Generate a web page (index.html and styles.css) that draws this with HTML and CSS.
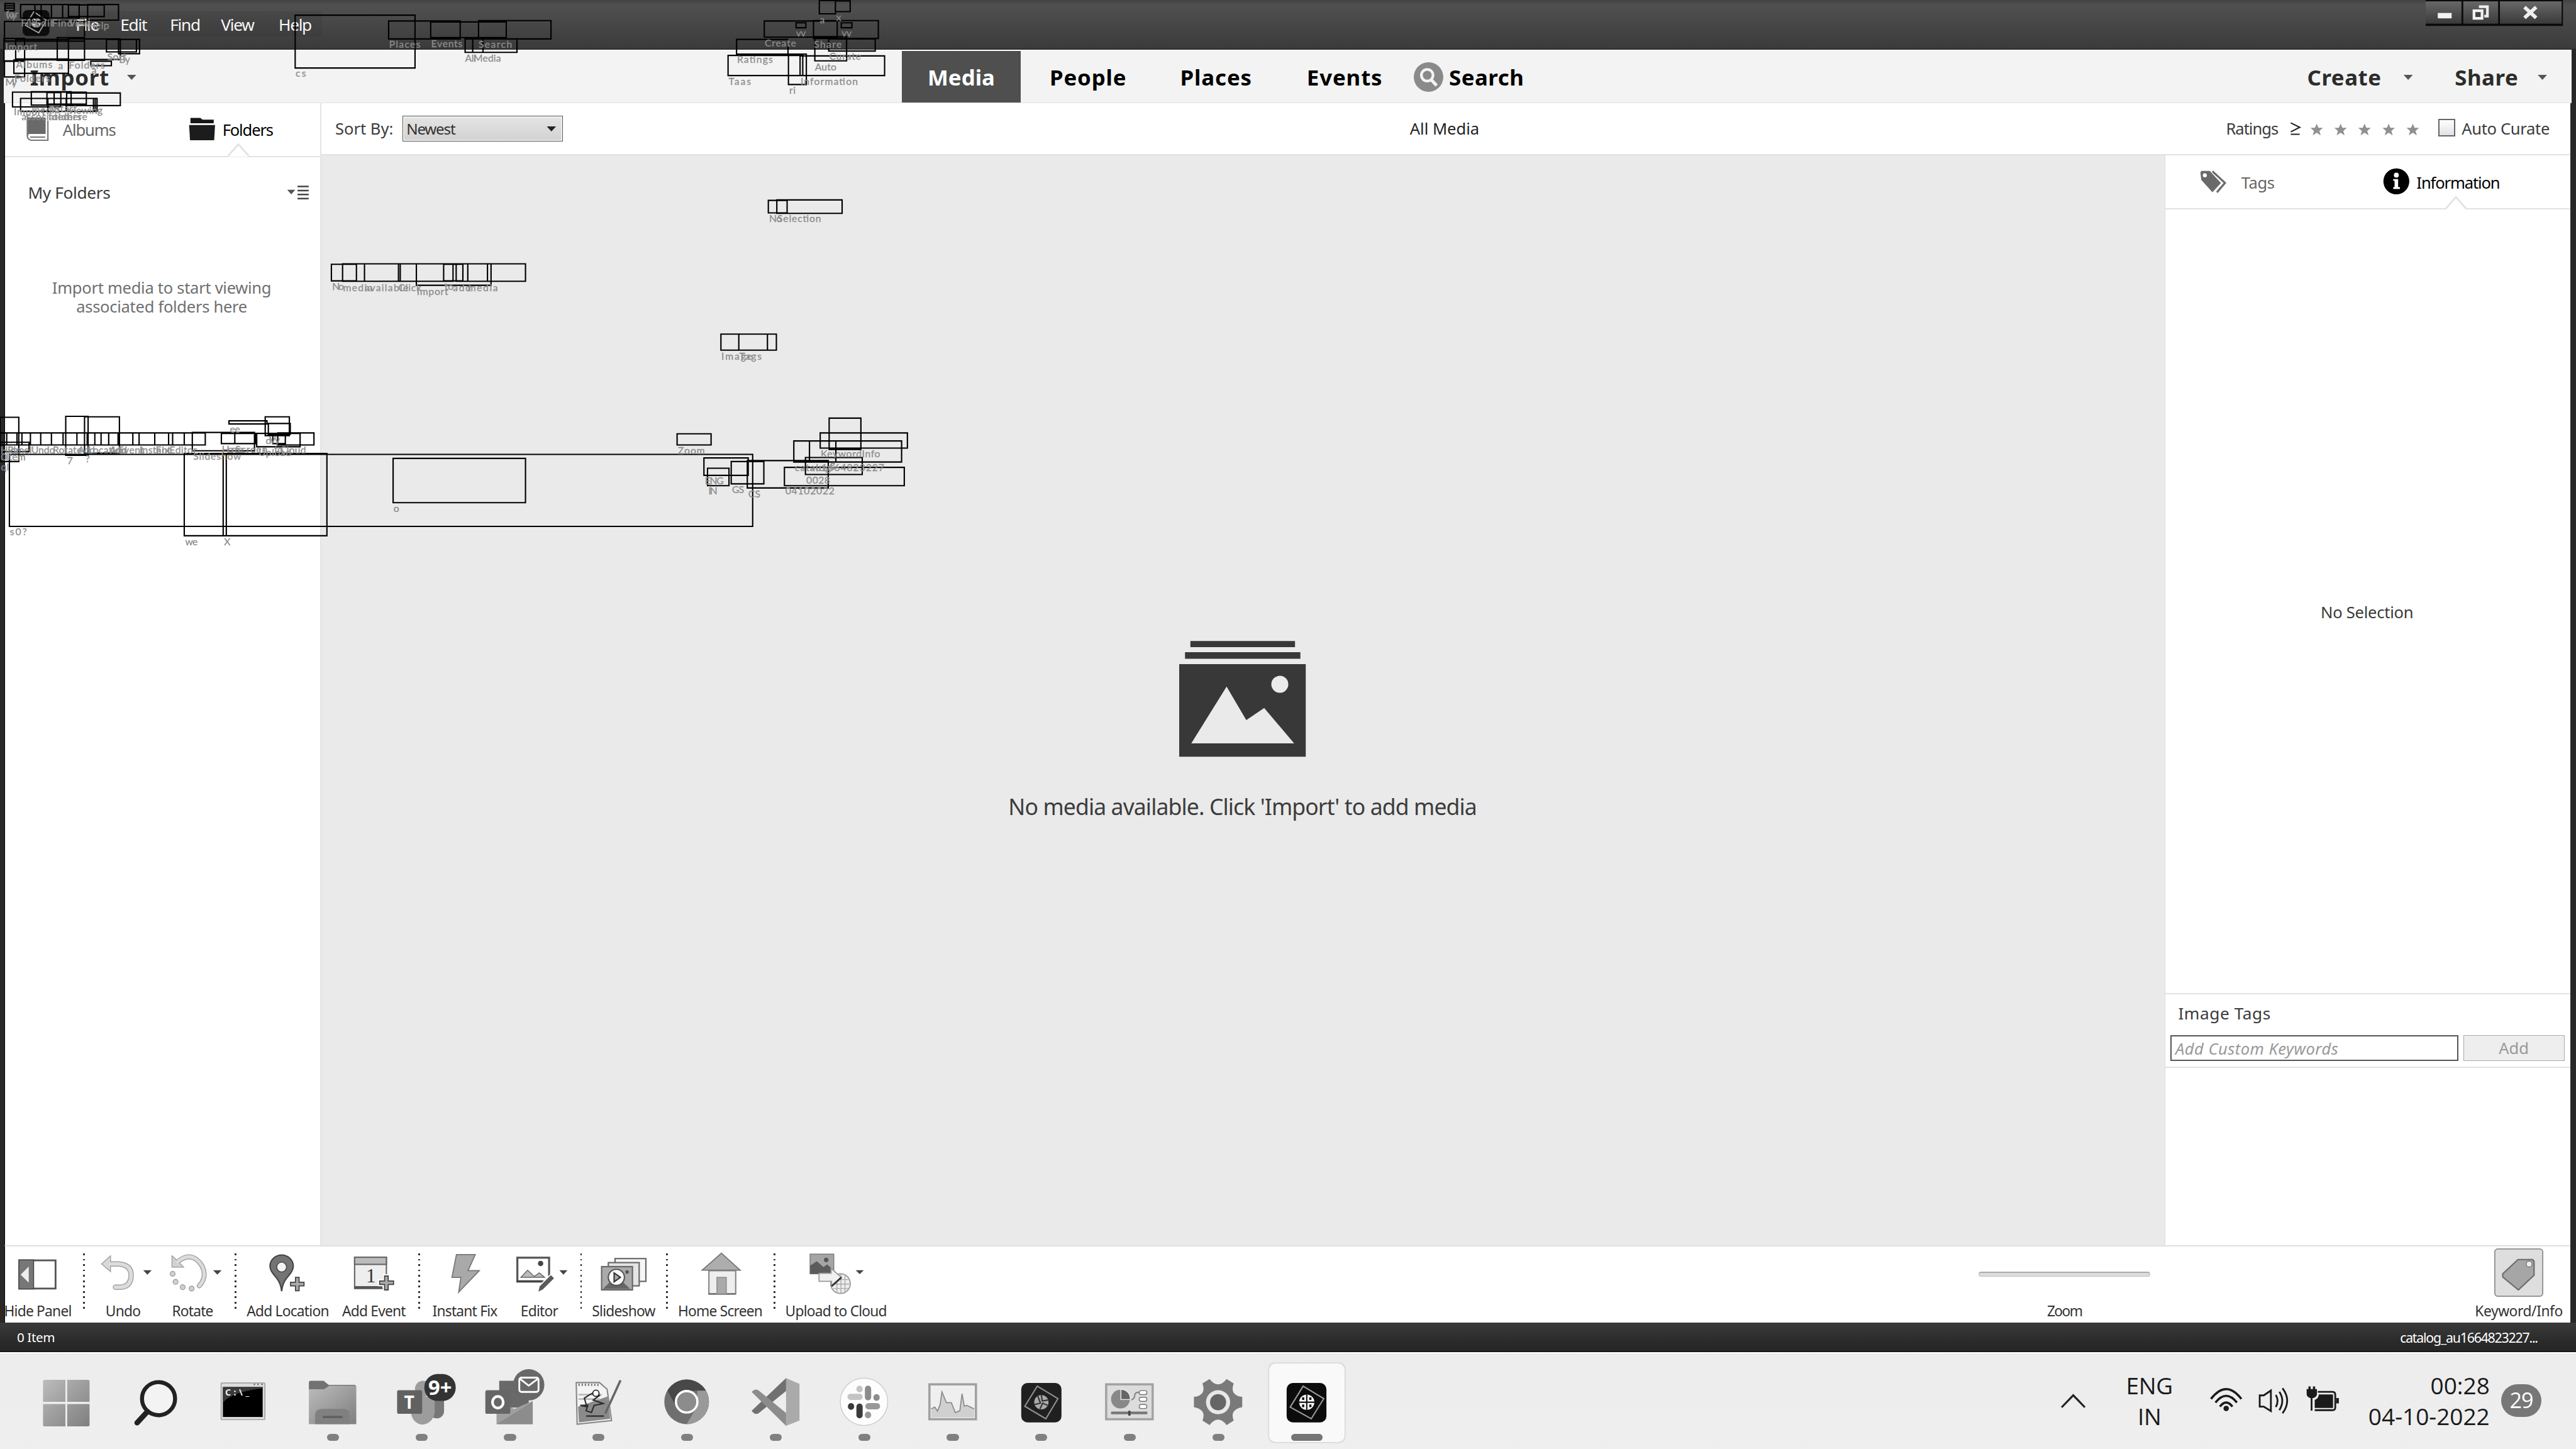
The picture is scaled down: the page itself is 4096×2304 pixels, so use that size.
FILE: index.html
```html
<!DOCTYPE html>
<html lang="en">
<head>
<meta charset="utf-8">
<title>Organizer</title>
<link rel="stylesheet" href="styles.css">
</head>
<body>
<div class="desktop">
  <header class="titlebar">
    <svg class="logo" viewBox="51 22 60 58"><rect x="51" y="22" width="60" height="58" rx="11" fill="#0d0d0d"/><path d="M76 26L104 45L87 73L57 56Z" fill="none" stroke="#a8a8a8" stroke-width="2.5"/><circle cx="81" cy="50" r="11" fill="#c9c9c9"/><path d="M81 39V61M70 50H92M74 43L88 57" stroke="#222" stroke-width="2"/></svg>
    <nav class="menu"><span class="m1">File</span><span class="m2">Edit</span><span class="m3">Find</span><span class="m4">View</span><span class="m5">Help</span></nav>
    <div class="winbtns">
      <svg viewBox="5424 0 307 58"><defs><linearGradient id="wb" x1="0" y1="0" x2="0" y2="1"><stop offset="0" stop-color="#686868"/><stop offset="1" stop-color="#3a3a3a"/></linearGradient></defs><rect x="5424" y="0" width="307" height="58" fill="#0a0a0a"/><rect x="5424" y="3" width="80" height="50" fill="url(#wb)"/><rect x="5508" y="3" width="78" height="50" fill="url(#wb)"/><rect x="5590" y="3" width="138" height="50" fill="url(#wb)"/><rect x="5451" y="29" width="31" height="12" fill="#f2f2f2"/><path d="M5543 15H5562V36H5555" fill="none" stroke="#eee" stroke-width="6"/><rect x="5532" y="24" width="18" height="17" fill="#444" stroke="#f2f2f2" stroke-width="6"/><path d="M5645 16L5671 40M5671 16L5645 40" stroke="#eee" stroke-width="8"/></svg>
    </div>
  </header>
  <nav class="modes">
    <div class="mode import">Import<i class="caret"></i></div>
    <div class="mode tab active">Media</div>
    <div class="mode people">People</div>
    <div class="mode places">Places</div>
    <div class="mode events">Events</div>
    <div class="mode search"><svg viewBox="0 0 66 66"><circle cx="33" cy="33" r="33" fill="#8a8a8a"/><circle cx="30" cy="29" r="13" fill="none" stroke="#f4f4f4" stroke-width="6"/><path d="M39 39L51 52" stroke="#f4f4f4" stroke-width="7"/></svg>Search</div>
    <div class="mode create">Create<i class="caret"></i></div>
    <div class="mode share">Share<i class="caret"></i></div>
  </nav>
  <div class="workspace">
    <aside class="left">
      <div class="tabs">
        <svg class="albums-ic" viewBox="60 266 51 56"><path d="M61 267H103V304H66Q63 306 63 311" fill="#6a6a6a"/><path d="M108 274V318H70Q62 316 62 308V270M68 311H102" fill="none" stroke="#777" stroke-width="3"/></svg>
        <span class="t-albums">Albums</span>
        <svg class="folders-ic" viewBox="422 262 60 54"><path d="M426 276V264H448L453 268H478V276Z" fill="#151515"/><path d="M423 280H481L479 314H425Z" fill="#1c1c1c"/></svg>
        <span class="t-folders">Folders</span>
        <svg class="notch n-left" viewBox="0 0 48 30"><path d="M1 30L24 0L47 30Z" fill="#fff"/><path d="M1 28L24 2L47 28" fill="none" stroke="#e2e2e2" stroke-width="4"/></svg>
      </div>
      <div class="folders-head"><span>My Folders</span>
        <svg viewBox="642 412 50 34"><path d="M643 423H661L652 433Z" fill="#555"/><path d="M666 415.500H691M666 424.500H691M666 433.500H691M666 442.500H691" stroke="#444" stroke-width="3.500"/></svg>
      </div>
      <p class="hint">Import media to start viewing<br>associated folders here</p>
    </aside>
    <div class="center-right">
      <div class="filter">
        <span class="sortby">Sort By:</span>
        <div class="select"><span>Newest</span><i class="caret dark"></i></div>
        <span class="allmedia">All Media</span>
        <span class="ratings">Ratings</span>
        <svg class="stars" viewBox="5120 264 292 44"><path d="M5122 273L5142 283L5122 293M5122 298.500H5142" fill="none" stroke="#222" stroke-width="3"/><defs><path id="st" d="M0-13L4-4L14-4L6 3L9 13L0 7L-9 13L-6 3L-14-4L-4-4Z" fill="#909090"/></defs><use href="#st" x="5180" y="288"/><use href="#st" x="5233.500" y="288"/><use href="#st" x="5287" y="288"/><use href="#st" x="5341" y="288"/><use href="#st" x="5395" y="288"/></svg>
        <i class="check"></i>
        <span class="curate">Auto Curate</span>
      </div>
      <div class="split">
        <main class="stage">
          <svg viewBox="2636 1430 284 264"><path d="M2661 1433H2895V1447H2661ZM2649 1458H2907V1473H2649ZM2636 1485H2919V1692H2636Z" fill="#383838"/><circle cx="2861" cy="1530" r="19" fill="#eaeaea"/><path d="M2663 1662L2742 1535L2786 1610L2826 1583L2893 1662Z" fill="#eaeaea"/></svg>
          <p>No media available. Click 'Import' to add media</p>
        </main>
        <aside class="right">
          <div class="tabs">
            <svg class="tags-ic" viewBox="4920 383 60 50"><path d="M4921 387L4924 384H4942L4967 411L4948 432L4923 404Z" fill="#6a6a6a"/><circle cx="4931" cy="394" r="4.500" fill="#fff"/><path d="M4948 385L4976 411L4958 432" fill="none" stroke="#6a6a6a" stroke-width="4.500"/></svg>
            <span class="t-tags">Tags</span>
            <svg class="info-ic" viewBox="0 0 60 60"><circle cx="30" cy="30" r="29" fill="#000"/><circle cx="30" cy="16" r="5.500" fill="#fff"/><path d="M23 25H34V43H38V47H23V43H26V29H23Z" fill="#fff"/></svg>
            <span class="t-info">Information</span>
            <svg class="notch n-right" viewBox="0 0 48 30"><path d="M1 30L24 0L47 30Z" fill="#fff"/><path d="M1 28L24 2L47 28" fill="none" stroke="#e2e2e2" stroke-width="4"/></svg>
          </div>
          <div class="nosel">No Selection</div>
          <div class="imgtags">
            <h2>Image Tags</h2>
            <div class="addrow"><div class="kw">Add Custom Keywords</div><div class="addbtn">Add</div></div>
          </div>
          <div class="blank"></div>
        </aside>
      </div>
    </div>
  </div>
  <footer class="tools">
    <div class="tool hide"><svg viewBox="12 2795 146 105"><rect x="44" y="2819" width="81" height="63" fill="#fff" stroke="#555" stroke-width="4"/><rect x="43" y="2818" width="33" height="65" fill="#777" stroke="#444" stroke-width="2"/><path d="M65 2833V2869L47 2851Z" fill="#eee"/></svg><span>Hide Panel</span></div>
    <i class="sep s1"></i>
    <div class="tool undo"><svg viewBox="216 2795 119 105"><path d="M246 2827H266Q294 2829 294 2852Q294 2878 270 2879H259" fill="none" stroke="#a2a2a2" stroke-width="12" stroke-linecap="round"/><path d="M248 2809V2844L228 2827Z" fill="#d8d8d8" stroke="#a2a2a2" stroke-width="2"/><path d="M246 2827H266Q294 2829 294 2852Q294 2878 270 2879H259" fill="none" stroke="#dcdcdc" stroke-width="8" stroke-linecap="round"/><path d="M321 2841H340L330.500 2851Z" fill="#444"/></svg><span>Undo</span></div>
    <div class="tool rotate"><svg viewBox="345 2795 172 105"><g fill="none" stroke-linecap="round"><path d="M398 2822Q420 2803 440 2817Q458 2832 457 2852Q456 2866 446 2876" stroke="#a2a2a2" stroke-width="11"/><path d="M385 2809V2834H411L403 2826L394 2817Z" fill="#d2d2d2" stroke="#a2a2a2" stroke-width="2"/><path d="M398 2822Q420 2803 440 2817Q458 2832 457 2852Q456 2866 446 2876" stroke="#dcdcdc" stroke-width="7"/></g><g fill="#d0d0d0" stroke="#a2a2a2" stroke-width="2"><circle cx="386.500" cy="2849" r="5.500"/><circle cx="393" cy="2867" r="5.500"/><circle cx="409" cy="2879" r="5.500"/><circle cx="429" cy="2882" r="5.500"/></g><path d="M477 2841H496L486.500 2851Z" fill="#444"/></svg><span>Rotate</span></div>
    <i class="sep s2"></i>
    <div class="tool addloc"><svg viewBox="529 2795 230 105"><path d="M630 2888Q628 2868 615 2854Q604 2842 604 2832A26 25 0 0 1 656 2832Q656 2842 645 2854Q632 2868 630 2888Z" fill="#747474" stroke="#444" stroke-width="3"/><circle cx="630" cy="2834" r="11" fill="#f4f4f4" stroke="#444" stroke-width="2"/><path d="M661 2857H669V2868H680V2876H669V2887H661V2876H650V2868H661Z" fill="#aaa" stroke="#444" stroke-width="2.500"/></svg><span>Add Location</span></div>
    <div class="tool addevt"><svg viewBox="759 2795 155 105"><rect x="794" y="2812" width="71" height="70" fill="#eee" stroke="#666" stroke-width="3"/><rect x="794" y="2812" width="71" height="16" fill="#bbb" stroke="#666" stroke-width="3"/><path d="M793 2879H856" stroke="#555" stroke-width="5"/><text x="830" y="2868" font-size="44" text-anchor="middle" class="serif" fill="#333">1</text><path d="M861 2854H869V2865H881V2873H869V2885H861V2873H850V2865H861Z" fill="#aaa" stroke="#fff" stroke-width="8"/><path d="M861 2854H869V2865H881V2873H869V2885H861V2873H850V2865H861Z" fill="#aaa" stroke="#444" stroke-width="2.500"/></svg><span>Add Event</span></div>
    <i class="sep s3"></i>
    <div class="tool fix"><svg viewBox="952 2795 176 105"><path d="M1022 2806H1064L1048 2842H1073L1027 2890L1032 2857H1012Z" fill="#a9a9a9" stroke="#777" stroke-width="2.500"/></svg><span>Instant Fix</span></div>
    <div class="tool editor"><svg viewBox="1128 2795 157 105"><rect x="1157" y="2813" width="71" height="53" fill="#fff" stroke="#555" stroke-width="4.500"/><path d="M1155 2866H1212" stroke="#444" stroke-width="5"/><circle cx="1209" cy="2826" r="6" fill="#444"/><path d="M1165 2857L1180 2841L1195 2855L1206 2847L1218 2857Z" fill="#bbb" stroke="#666" stroke-width="2"/><path d="M1204 2889L1207 2877L1232 2852L1239 2859L1214 2884Z" fill="#666" stroke="#fff" stroke-width="5"/><path d="M1204 2889L1207 2877L1232 2852L1239 2859L1214 2884Z" fill="#5a5a5a"/><path d="M1251 2841H1269L1260 2851Z" fill="#444"/></svg><span>Editor</span></div>
    <i class="sep s4"></i>
    <div class="tool slide"><svg viewBox="1310 2795 170 105"><g stroke="#666" stroke-width="3"><rect x="1376" y="2815" width="69" height="51" fill="#f6f6f6"/><rect x="1361" y="2824" width="69" height="52" fill="#e4e4e4"/><rect x="1346" y="2833" width="69" height="52" fill="#aaa"/></g><path d="M1349 2883L1366 2866H1392L1410 2883Z" fill="#666"/><circle cx="1403" cy="2845" r="4" fill="#555"/><circle cx="1379" cy="2857" r="18" fill="#fff" stroke="#555" stroke-width="3"/><path d="M1374 2847V2867L1388 2857Z" fill="#aaa" stroke="#333" stroke-width="3"/></svg><span>Slideshow</span></div>
    <i class="sep s5"></i>
    <div class="tool home"><svg viewBox="1500 2795 222 105"><rect x="1586" y="2842" width="60" height="52" fill="#eee" stroke="#888" stroke-width="3"/><path d="M1585 2894H1646" stroke="#777" stroke-width="4"/><rect x="1604" y="2857" width="21" height="37" fill="#aaa" stroke="#888" stroke-width="2"/><path d="M1614 2803L1656 2841H1571Z" fill="#adadad" stroke="#777" stroke-width="2.500"/></svg><span>Home Screen</span></div>
    <i class="sep s6"></i>
    <div class="tool upload"><svg viewBox="1750 2795 240 105"><circle cx="1880" cy="2871" r="22" fill="#eee" stroke="#999" stroke-width="2.500"/><path d="M1864 2862H1898M1860 2872H1900M1864 2882H1898M1872 2852V2890M1881 2850V2892M1890 2853V2890" stroke="#aaa" stroke-width="2"/><rect x="1812" y="2805" width="53" height="44" fill="#a5a5a5" stroke="#777" stroke-width="2"/><path d="M1812 2849V2831L1827 2821L1842 2834L1850 2828L1864 2840V2849Z" fill="#5c5c5c"/><circle cx="1848" cy="2818" r="5" fill="#555"/><path d="M1832 2848H1859V2837L1882 2857L1860 2876V2866H1832Z" fill="#f0f0f0" stroke="#999" stroke-width="2.500"/><path d="M1882 2857L1860 2877" stroke="#333" stroke-width="4"/><path d="M1914 2841H1932L1923 2850Z" fill="#444"/></svg><span>Upload to Cloud</span></div>
    <div class="zoomer"><i class="track"></i><span>Zoom</span></div>
    <div class="tool kwinfo"><div class="kwbtn"><svg viewBox="5578 2793 110 108"><path d="M5631 2818H5664L5667 2822V2853L5632 2886L5597 2857V2850Z" fill="#a6a6a6" stroke="#6c6c6c" stroke-width="3"/><circle cx="5656" cy="2828" r="6.500" fill="#eee" stroke="#777" stroke-width="2"/></svg></div><span>Keyword/Info</span></div>
  </footer>
  <div class="status"><span>0 Item</span><span class="cat">catalog_au1664823227...</span></div>
  <div class="taskbar">
    <div class="apps">
      <div class="app"><svg viewBox="49 3023 198 217"><defs><linearGradient id="g1" x1="0" y1="0" x2="1" y2="1"><stop offset="0" stop-color="#bcbcbc"/><stop offset="1" stop-color="#7e7e7e"/></linearGradient></defs><path d="M96 3089Q96 3085 100 3085H146V3134H96ZM150 3085H196Q200 3085 200 3089V3134H150ZM96 3139H146V3189H100Q96 3189 96 3185ZM150 3139H200V3185Q200 3189 196 3189H150Z" fill="url(#g1)"/></svg></div>
      <div class="app"><svg viewBox="247 3023 198 217"><circle cx="354" cy="3127" r="37" fill="#f3f3f3" stroke="#222" stroke-width="9"/><path d="M329 3156L306 3181" stroke="#222" stroke-width="12" stroke-linecap="round"/></svg></div>
      <div class="app"><svg viewBox="445 3023 198 217"><rect x="495" y="3092" width="98" height="82" rx="2" fill="#ddd" stroke="#999" stroke-width="2"/><rect x="499" y="3101" width="89" height="67" fill="#000"/><path d="M500 3101H588V3104Q520 3112 500 3135Z" fill="#3a3a3a"/><path d="M568 3095H571M576 3095H579M585 3095H588" stroke="#555" stroke-width="3"/><text x="504" y="3120" font-size="20" font-weight="700" textLength="54" fill="#eee">C:\_</text></svg></div>
      <div class="app run"><svg viewBox="643 3023 198 217"><path d="M691 3091Q691 3087 695 3087H724L735 3096H795V3110H691Z" fill="#727272"/><path d="M691 3106H725L737 3098H797V3184H691Z" fill="url(#g1)"/><path d="M705 3184V3162Q707 3150 720 3150H768Q782 3150 782 3162V3184Z" fill="#808080"/><path d="M722 3168H766" stroke="#5f5f5f" stroke-width="5"/></svg></div>
      <div class="app run"><svg viewBox="841 3023 198 217"><path d="M968 3118H993V3156Q992 3168 980 3171Q968 3172 962 3164Z" fill="#777"/><circle cx="946" cy="3105" r="18" fill="#9c9c9c"/><path d="M920 3122H972V3158Q968 3182 945 3185Q924 3183 919 3160Z" fill="#9c9c9c"/><rect x="888" y="3108" width="56" height="53" rx="4" fill="#616161"/><text x="915" y="3149" font-size="40" font-weight="700" text-anchor="middle" fill="#fff">T</text><rect x="949" y="3072" width="70" height="60" rx="29" fill="#333"/><text x="984" y="3118" font-size="46" font-weight="700" text-anchor="middle" fill="#fff">9+</text></svg></div>
      <div class="app run"><svg viewBox="1039 3023 198 217"><rect x="1116" y="3087" width="66" height="60" fill="#696969"/><path d="M1110 3132L1150 3150L1191 3132V3184H1110Z" fill="#a0a0a0"/><path d="M1110 3184L1191 3134V3184Z" fill="#8c8c8c"/><rect x="1085" y="3108" width="56" height="53" rx="4" fill="#666"/><ellipse cx="1113" cy="3135" rx="12" ry="13" fill="none" stroke="#fff" stroke-width="6"/><circle cx="1182" cy="3096" r="35" fill="#686868"/><rect x="1161" y="3080" width="43" height="32" rx="5" fill="none" stroke="#fff" stroke-width="4"/><path d="M1163 3083L1182 3098L1202 3083" fill="none" stroke="#fff" stroke-width="4"/></svg></div>
      <div class="app run"><svg viewBox="1237 3023 198 217"><path d="M1288 3091H1340L1357 3106L1367 3176L1290 3184Z" fill="#f4f4f4" stroke="#888" stroke-width="3"/><path d="M1292 3145L1358 3122L1364 3172L1294 3180Z" fill="#8a8a8a"/><path d="M1293 3118H1345M1293 3128H1340" stroke="#bbb" stroke-width="4"/><path d="M1297 3142L1312 3145L1306 3126L1318 3118L1330 3112L1340 3120L1326 3130L1348 3138L1328 3142L1322 3158L1310 3154L1314 3142L1297 3142M1310 3166H1350" fill="none" stroke="#2c2c2c" stroke-width="3"/><circle cx="1332" cy="3115" r="7" fill="#fff" stroke="#222" stroke-width="2.500"/><path d="M1387 3086L1353 3160" stroke="#666" stroke-width="5"/><path d="M1293 3096H1340" stroke="#777" stroke-width="5" stroke-dasharray="3 4"/></svg></div>
      <div class="app run"><svg viewBox="1435 3023 198 217"><circle cx="1536" cy="3134" r="50" fill="#6f6f6f"/><path d="M1493 3109A50 50 0 0 1 1579 3109H1536L1513 3145Z" fill="#484848"/><path d="M1579 3109A50 50 0 0 1 1536 3184L1558 3147L1560 3109Z" fill="#999"/><circle cx="1536" cy="3134" r="24" fill="#8c8c8c" stroke="#fff" stroke-width="5"/></svg></div>
      <div class="app run"><svg viewBox="1633 3023 198 217"><path d="M1758 3081L1788 3094V3176L1758 3188Z" fill="#aaa"/><path d="M1681 3154L1758 3081V3110L1696 3160Q1688 3164 1681 3154Z" fill="#707070"/><path d="M1681 3112Q1688 3104 1696 3108L1758 3159V3188Z" fill="#8c8c8c"/></svg></div>
      <div class="app run"><svg viewBox="1831 3023 198 217"><circle cx="1932" cy="3134" r="53" fill="#fdfdfd" stroke="#ccc" stroke-width="2"/><g stroke-width="14" stroke-linecap="round"><path d="M1922 3105V3106M1902 3123H1922" stroke="#c4c4c4"/><path d="M1941 3105V3124M1960 3124V3125" stroke="#8c8c8c"/><path d="M1903 3144V3145M1922 3145V3164" stroke="#3a3a3a"/><path d="M1942 3144H1961M1941 3163V3164" stroke="#999"/></g></svg></div>
      <div class="app run"><svg viewBox="2029 3023 198 217"><rect x="2078" y="3095" width="104" height="78" fill="#efefef" stroke="#a0a0a0" stroke-width="5"/><path d="M2082 3150L2090 3146L2096 3155L2102 3140L2106 3112L2116 3136L2127 3136L2136 3158L2146 3154L2151 3116L2156 3144L2162 3142L2178 3150V3169H2082Z" fill="#d0d0d0"/><path d="M2082 3150L2090 3146L2096 3155L2102 3140L2106 3112L2116 3136L2127 3136L2136 3158L2146 3154L2151 3116L2156 3144L2162 3142L2178 3150" fill="none" stroke="#8c8c8c" stroke-width="2.500"/></svg></div>
      <div class="app run"><svg viewBox="2227 3023 198 217"><rect x="2283" y="3092" width="90" height="88" rx="14" fill="#202020"/><path d="M2319 3099L2365 3127L2338 3172L2291 3144Z" fill="none" stroke="#8f8f8f" stroke-width="3"/><circle cx="2328" cy="3135" r="16" fill="#aaa"/><path d="M2328 3119L2330 3132L2343 3130M2342 3142L2331 3137L2325 3150M2313 3140L2326 3137L2320 3121" fill="none" stroke="#333" stroke-width="3"/></svg></div>
      <div class="app run"><svg viewBox="2425 3023 198 217"><rect x="2474" y="3095" width="104" height="78" fill="#dcdcdc" stroke="#a3a3a3" stroke-width="5"/><circle cx="2506" cy="3128" r="21" fill="#888"/><path d="M2507 3106V3129H2528A21 21 0 0 0 2507 3106Z" fill="#666" stroke="#eee" stroke-width="2"/><path d="M2530 3130Q2538 3128 2538 3118Q2540 3112 2549 3113" fill="none" stroke="#888" stroke-width="3"/><g fill="#fff" stroke="#777" stroke-width="2"><rect x="2548" y="3109" width="17" height="9" rx="4"/><rect x="2548" y="3124" width="17" height="9" rx="4"/><rect x="2548" y="3140" width="17" height="9" rx="4"/></g><path d="M2485 3159H2566" stroke="#777" stroke-width="6"/><path d="M2526 3154V3165" stroke="#444" stroke-width="5"/></svg></div>
      <div class="app run"><svg viewBox="2623 3023 198 217"><path d="M2705 3083Q2714 3095 2724 3095Q2734 3095 2743 3083L2759 3093Q2754 3106 2759 3114Q2765 3122 2778 3123V3146Q2765 3148 2759 3156Q2754 3164 2759 3176L2743 3186Q2734 3174 2724 3174Q2714 3174 2705 3186L2689 3176Q2694 3164 2689 3156Q2683 3148 2670 3146V3123Q2683 3122 2689 3114Q2694 3106 2689 3093Z" fill="#7a7a7a"/><circle cx="2724" cy="3135" r="27" fill="#e8e8e8"/><circle cx="2724" cy="3135" r="18" fill="#666"/></svg></div>
      <div class="app run current"><svg viewBox="2821 3023 198 217"><rect x="2877" y="3092" width="89" height="88" rx="14" fill="#0c0c0c"/><path d="M2914 3099L2960 3127L2932 3172L2885 3146Z" fill="none" stroke="#9a9a9a" stroke-width="3"/><circle cx="2922" cy="3135" r="17" fill="#fff"/><path d="M2922 3118V3152M2905 3135H2939" stroke="#111" stroke-width="3"/><path d="M2914 3124V3130M2930 3124V3130M2914 3140V3146M2930 3140V3146" stroke="#111" stroke-width="5"/></svg></div>
    </div>
    <div class="tray">
      <svg class="chev" viewBox="4606 3112 58 34"><path d="M4609 3144L4635 3117L4661 3144" fill="none" stroke="#222" stroke-width="4.500"/></svg>
      <div class="lang">ENG<br>IN</div>
      <svg class="sys" viewBox="4938 3095 296 72"><g fill="none" stroke="#1a1a1a" stroke-width="5"><path d="M4943 3128Q4977 3084 5011 3128M4953 3136Q4977 3106 5001 3136M4963 3145Q4977 3127 4991 3145"/><path d="M5052 3120H5061L5077 3109V3155L5061 3145H5052Z" stroke-width="4"/><path d="M5088 3119Q5096 3132 5088 3146M5096 3112Q5109 3132 5096 3153M5103 3104Q5124 3132 5103 3160" stroke-width="4"/><path d="M5182 3112H5215Q5221 3112 5221 3119V3147Q5221 3153 5215 3153H5175M5168 3120V3154" stroke-width="4"/></g><circle cx="4977" cy="3149" r="6" fill="#1a1a1a"/><path d="M5157 3106H5180V3118Q5179 3124 5172 3126H5165Q5158 3124 5157 3118ZM5161 3100H5166V3108H5161ZM5171 3100H5176V3108H5171ZM5223 3126H5229V3138H5223ZM5184 3118H5216V3148H5175V3130Q5184 3127 5184 3118Z" fill="#1a1a1a"/></svg>
      <div class="clock">00:28<br>04-10-2022</div>
      <div class="badge">29</div>
    </div>
  </div>
  <svg class="marks" viewBox="0 0 5760 3240">
    <path d="M11 8H32V24H11ZM11 13H32M11 18H32M46 10H177V40H46ZM78 10V40M92 10V40M115 10V40M140 10V40M153 11H233V37H153ZM196 10H265V45H196Z
M10 48H189V92H10ZM9 86H55V137H9ZM35 88H153V132H35ZM128 84H189V135H128ZM153 87H269V133H153ZM238 88H305V116H238ZM265 88H312V120H265ZM203 137H249V147H203ZM10 136H55V172H10ZM31 134H153V164H31Z
M28 206H136V239H28ZM70 205H159V235H70ZM105 207H136V233H105ZM121 206H193V233H121ZM149 208H269V236H149ZM46 220H148V249H46ZM107 220H213V249H107ZM148 220H217V249H148ZM209 220V249M660 34H928V152H660Z
M869 47H1029V87H869ZM963 49H1132V84H963ZM1070 46H1232V87H1070ZM1040 87H1080V117H1040ZM1057 87H1156V117H1057Z
M1832 1H1868V31H1832ZM1868 2H1901V26H1868ZM1709 47H1872V83H1709ZM1780 51H1802V62H1780ZM1881 51H1905V62H1881ZM1819 46H1964V86H1819ZM1647 88H1762V121H1647ZM1853 87H1957V114H1853ZM1822 82H1893V136H1822ZM1628 124H1795V169H1628ZM1763 121H1803V189H1763ZM1789 125H1978V169H1789Z
M1718 448H1760V476H1718ZM1737 447H1883V477H1737Z
M741 591H797V628H741ZM766 590H891V629H766ZM815 590H895V629H815ZM891 590H1013V629H891ZM931 590H1098V638H931ZM992 591H1035V628H992ZM1020 590H1090V629H1020ZM1046 590H1175V629H1046Z
M1612 747H1716V783H1612ZM1652 747H1736V783H1652Z
M0 933H42V1032H0ZM0 968H459V995H0ZM15 968V995M38 968V995M49 968V995M68 968V995M91 968V995M115 968V995M141 968V995M172 968V995M195 968V995M212 968V995M226 968V995M243 968V995M264 968V995M297 968V995M311 968V995M346 968V995M377 968V995M386 968V995M412 968V995
M0 989H65V1010H0ZM147 931H197V1018H147ZM189 932H267V1013H189ZM430 967H569V1008H430ZM495 969H525V992H495ZM525 969H572V992H525ZM512 941H597V948H512ZM593 932H647V974H593ZM600 947H649V971H600ZM574 969H671V999H574ZM610 969H638V992H610ZM621 968H702V995H621Z
M21 1016H1683V1177H21ZM412 1014H506V1198H412ZM499 1014H731V1198H499ZM879 1025H1175V1124H879Z
M1514 970H1590V995H1514ZM1574 1024H1673V1063H1574ZM1582 1047H1630V1086H1582ZM1635 1032H1708V1082H1635ZM1671 1030H1852V1091H1671ZM1801 1023H1928V1061H1801ZM1754 1045H2022V1086H1754ZM1775 986H1869V1033H1775ZM1810 986H2016V1033H1810ZM1854 935H1925V1005H1854ZM1834 968H2029V1002H1834Z"/>
    <g>
      <text x="13" y="39" textLength="28">for</text><text x="13" y="42" textLength="24">wy</text>
      <text x="47" y="59" textLength="34">File</text><text x="78" y="59" textLength="42">Edit</text><text x="116" y="59" textLength="46">Find</text><text x="154" y="59" textLength="46">View</text><text x="197" y="65" textLength="47">Help</text>
      <text x="12" y="112" textLength="71">Import</text><text x="36" y="152" textLength="81">Albums</text><text x="130" y="155">a</text><text x="154" y="153" textLength="80">Folders</text><text x="240" y="135" textLength="42">Sort</text><text x="266" y="140" textLength="25">By</text><text x="205" y="165">a</text><text x="12" y="191" textLength="26">My</text><text x="32" y="183" textLength="80">Folders</text>
      <text x="31" y="258" textLength="70">Import</text><text x="71" y="253" textLength="62">media</text><text x="113" y="251" textLength="20">to</text><text x="124" y="251" textLength="48">start</text><text x="153" y="254" textLength="76">viewing</text><text x="48" y="269" textLength="106">associated</text><text x="108" y="269" textLength="74">folders</text><text x="150" y="269" textLength="45">here</text>
      <text x="661" y="172" textLength="23">cs</text><text x="870" y="107" textLength="70">Places</text><text x="964" y="105" textLength="70">Events</text><text x="1070" y="107" textLength="75">Search</text><text x="1040" y="138" textLength="24">All</text><text x="1059" y="138" textLength="61">Media</text>
      <text x="1833" y="52">a</text><text x="1870" y="46">x</text><text x="1710" y="104" textLength="70">Create</text><text x="1780" y="82" textLength="22">vv</text><text x="1882" y="82" textLength="22">vv</text><text x="1820" y="107" textLength="62">Share</text><text x="1648" y="141" textLength="80">Ratings</text><text x="1854" y="134" textLength="71">Curate</text><text x="1822" y="157" textLength="48">Auto</text><text x="1629" y="190" textLength="50">Taas</text><text x="1765" y="209" textLength="14">ri</text><text x="1790" y="190" textLength="128">Information</text>
      <text x="1720" y="496" textLength="28">No</text><text x="1738" y="497" textLength="98">Selection</text>
      <text x="743" y="648" textLength="26">No</text><text x="767" y="651" textLength="66">media</text><text x="815" y="651" textLength="98">available</text><text x="891" y="651" textLength="51">Click</text><text x="932" y="659" textLength="70">Import</text><text x="994" y="648" textLength="20">to</text><text x="1013" y="651" textLength="40">add</text><text x="1046" y="651" textLength="67">media</text>
      <text x="1613" y="804" textLength="69">Image</text><text x="1653" y="804" textLength="50">Tags</text>
      <text x="2" y="1052" textLength="18">ql</text><text x="1" y="1014" textLength="46">Hide</text><text x="17" y="1014" textLength="54">Panel</text><text x="70" y="1014" textLength="53">Undo</text><text x="118" y="1014" textLength="65">Rotate</text><text x="174" y="1014" textLength="38">Add</text><text x="197" y="1014" textLength="85">Location</text><text x="245" y="1014" textLength="39">Add</text><text x="264" y="1014" textLength="58">Event</text><text x="312" y="1014" textLength="70">Instant</text><text x="348" y="1014" textLength="31">Fix</text><text x="379" y="1014" textLength="61">Editor</text>
      <text x="2" y="1030">0</text><text x="13" y="1030" textLength="44">Item</text><text x="150" y="1038">7</text><text x="191" y="1034">?</text><text x="432" y="1028" textLength="107">Slideshow</text><text x="496" y="1012" textLength="48">Home</text><text x="526" y="1012" textLength="72">Screen</text><text x="514" y="967" textLength="23">ee</text><text x="594" y="993">d</text><text x="602" y="991" textLength="24">Vy</text><text x="578" y="1020" textLength="73">Upload</text><text x="613" y="1013" textLength="20">to</text><text x="626" y="1014" textLength="58">Cloud</text>
      <text x="22" y="1197" textLength="38">s0?</text><text x="414" y="1219" textLength="28">we</text><text x="501" y="1219">X</text><text x="880" y="1145">o</text>
      <text x="1516" y="1015" textLength="60">Zoom</text><text x="1576" y="1083" textLength="42">ENG</text><text x="1584" y="1106" textLength="20">IN</text><text x="1637" y="1103" textLength="27">GS</text><text x="1673" y="1112" textLength="27">CS</text><text x="1803" y="1082" textLength="53">0028</text><text x="1756" y="1106" textLength="110">04102022</text><text x="1777" y="1053" textLength="80">catalog</text><text x="1811" y="1053" textLength="166">au1664823227</text><text x="1856" y="1046">g</text><text x="1835" y="1022" textLength="133">KeywordInfo</text>
    </g>
  </svg>
</div>
</body>
</html>
```
FILE: styles.css
```css
/* 1rem = 100 design units; the design is 5760 x 3240 units */
html { font-size: 71.1111px; }
* { box-sizing: border-box; margin: 0; padding: 0; }
body { width: 57.6rem; height: 32.4rem; overflow: hidden; font-family: "Noto Sans", sans-serif; color: #3a3a3a; }
svg { display: block; overflow: visible; font-family: "Noto Sans", sans-serif; }
.serif { font-family: "Liberation Serif", serif; }
.desktop { position: relative; width: 57.6rem; height: 32.4rem; display: flex; flex-direction: column; background: #282828; white-space: nowrap; overflow: hidden; }

.titlebar { height: 1.11rem; flex: none; display: flex; background: linear-gradient(#434343 0, #505050 10%, #3b3b3b 97%, #222 100%); }
.logo { width: .6rem; height: .58rem; margin: .22rem 0 0 .51rem; }
.menu { display: flex; width: 5.73rem; height: .57rem; margin: .25rem 0 0 .36rem; background: rgba(0,0,0,.06); color: #f6f6f6; font-size: .37rem; line-height: .6rem; letter-spacing: -.05em; }
.menu span { flex: none; }
.m1 { width: 1.22rem; padding-left: .22rem; }
.m2 { width: 1.11rem; }
.m3 { width: 1.14rem; }
.m4 { width: 1.29rem; }
.winbtns { margin-left: auto; margin-right: .29rem; width: 3.07rem; }
.winbtns svg { width: 3.07rem; height: .58rem; }

.modes { height: 1.19rem; flex: none; display: flex; margin: 0 .1rem 0 .09rem; background: #f3f3f3; border-top: .04rem solid #fff; border-bottom: .02rem solid #e2e2e2; font-weight: 700; font-size: .49rem; line-height: 1.13rem; letter-spacing: .015em; color: #000; }
.mode { flex: none; display: flex; align-items: center; padding-top: .03rem; }
.import { width: 20.07rem; padding-left: .58rem; color: #2c2c2c; letter-spacing: .02em; }
.import .caret { margin-left: .39rem; }
.caret { width: .22rem; height: .12rem; background: #555; clip-path: polygon(0 0, 100% 0, 50% 100%); flex: none; }
.tab { width: 2.67rem; height: 1.16rem; justify-content: center; background: #4f4f4f; color: #fff; letter-spacing: 0; }
.people { width: 2.94rem; padding-left: .64rem; letter-spacing: .025em; }
.places { width: 2.84rem; padding-left: .62rem; letter-spacing: .025em; }
.events { width: 2.69rem; padding-left: .61rem; letter-spacing: .025em; }
.search { width: 20.29rem; padding-left: .32rem; letter-spacing: .015em; }
.search svg { width: .66rem; height: .66rem; margin-right: .12rem; }
.create { width: 3.3rem; color: #2c2c2c; }
.share { color: #2c2c2c; }
.create .caret { margin-left: .49rem; }
.share .caret { margin-left: .43rem; }

.workspace { height: 25.54rem; flex: none; display: flex; margin-right: .12rem; border-left: .02rem solid #000; margin-left: .1rem; background: #fff; }
.left { width: 7.07rem; flex: none; border-right: .03rem solid #e4e4e4; font-size: .36rem; }
.tabs { position: relative; height: 1.21rem; display: flex; align-items: center; border-bottom: .03rem solid #e2e2e2; font-size: .36rem; letter-spacing: -.045em; line-height: 1.18rem; color: #666; }
.tabs span { padding-top: .03rem; flex: none; }
.notch { position: absolute; width: .48rem; height: .3rem; bottom: -.03rem; }
.n-left { left: 4.98rem; }
.n-right { left: 6.26rem; }
.albums-ic { width: .51rem; height: .56rem; margin-left: .48rem; }
.t-albums { width: 3.11rem; padding-left: .3rem; }
.folders-ic { width: .6rem; height: .54rem; }
.t-folders, .t-info { color: #000; }
.t-folders { padding-left: .16rem; }
.folders-head { display: flex; align-items: center; justify-content: space-between; margin-top: .42rem; height: .74rem; padding: 0 .25rem 0 .51rem; font-size: .37rem; letter-spacing: -.015em; }
.folders-head svg { width: .5rem; height: .34rem; }
.hint { margin-top: 1.54rem; padding-right: .04rem; text-align: center; color: #707070; line-height: .43rem; letter-spacing: -.012em; }

.center-right { flex: 1; display: flex; flex-direction: column; }
.filter { height: 1.17rem; flex: none; display: flex; align-items: center; border-bottom: .03rem solid #e2e2e2; padding-top: .02rem; font-size: .36rem; line-height: 1.15rem; color: #3c3c3c; }
.sortby { width: 1.81rem; padding-left: .31rem; }
.select { display: flex; align-items: center; justify-content: space-between; width: 3.59rem; height: .58rem; padding: 0 .13rem 0 .08rem; border: .025rem solid #555; background: linear-gradient(#e4e4e4, #d2d2d2); box-shadow: inset 0 0 0 .02rem #f8f8f8; font-size: .34rem; letter-spacing: -.05em; line-height: .5rem; color: #333; }
.caret.dark { background: #222; }
.allmedia { margin-left: 18.94rem; width: 18.25rem; color: #222; }
.ratings { width: 1.43rem; letter-spacing: -.04em; }
.stars { width: 2.92rem; height: .44rem; }
.check { width: .39rem; height: .4rem; margin-left: .39rem; margin-bottom: .05rem; border: .03rem solid #666; background: linear-gradient(#fff, #e2e2e2); }
.curate { margin-left: .14rem; letter-spacing: -.013em; }

.split { flex: 1; display: flex; }
.stage { width: 41.23rem; flex: none; background: #eaeaea; display: flex; flex-direction: column; align-items: center; padding-top: 10.83rem; padding-right: .02rem; border-right: .02rem solid #dcdcdc; }
.stage svg { width: 2.84rem; height: 2.64rem; }
.stage p { margin-top: .73rem; font-size: .5rem; line-height: .74rem; letter-spacing: -.025em; color: #3c3c3c; }
.right { flex: 1; display: flex; flex-direction: column; font-size: .36rem; }
.right .tabs { flex: none; height: 1.21rem; }
.right .tabs span { padding-top: .05rem; }
.tags-ic { width: .6rem; height: .5rem; margin-left: .78rem; }
.t-tags { width: 3.51rem; padding-left: .32rem; letter-spacing: -.015em; }
.info-ic { width: .6rem; height: .6rem; margin-left: -.02rem; }
.t-info { padding-left: .15rem; }
.nosel { height: 17.53rem; flex: none; display: flex; justify-content: center; padding-top: 8.77rem; padding-right: .04rem; line-height: .5rem; letter-spacing: -.01em; }
.imgtags { height: 1.67rem; flex: none; border-top: .03rem solid #e2e2e2; border-bottom: .03rem solid #e2e2e2; padding: .17rem .14rem 0 .12rem; }
.imgtags h2 { font-size: .37rem; font-weight: 400; line-height: .53rem; padding-left: .17rem; letter-spacing: .02em; }
.addrow { display: flex; justify-content: space-between; margin-top: .21rem; height: .58rem; line-height: .55rem; color: #999; }
.kw { width: 6.43rem; border: .03rem solid #555; padding-left: .08rem; font-style: italic; letter-spacing: .018em; }
.addbtn { width: 2.26rem; border: .02rem solid #aaa; background: #eee; text-align: center; }

.tools { height: 1.73rem; flex: none; display: flex; margin: 0 .12rem 0 .1rem; border-left: .02rem solid #000; border-top: .03rem solid #e0e0e0; background: #fff; font-size: .32rem; letter-spacing: -.034em; color: #333; overflow: hidden; }
.tool { flex: none; display: flex; flex-direction: column; align-items: center; padding-top: .08rem; }
.tool > svg { width: 100%; height: 1.05rem; }
.tool span, .zoomer span { line-height: .5rem; margin-top: .07rem; }
.sep { flex: none; width: .04rem; height: 1.26rem; margin-top: .16rem; background: repeating-linear-gradient(#333 0, #333 .04rem, transparent .04rem, transparent .12rem); }
.hide { width: 1.46rem; }
.s1 { margin-left: .28rem; margin-right: .26rem; }
.undo { width: 1.19rem; }
.rotate { width: 1.72rem; margin-left: .1rem; }
.s2 { margin-left: .08rem; }
.addloc { width: 2.3rem; }
.addevt { width: 1.55rem; }
.s3 { margin-left: .22rem; margin-right: .12rem; }
.fix { width: 1.76rem; }
.editor { width: 1.57rem; }
.s4 { margin-left: .13rem; margin-right: .08rem; }
.slide { width: 1.7rem; }
.s5 { margin-left: .1rem; margin-right: .06rem; }
.home { width: 2.22rem; }
.s6 { margin-left: .09rem; margin-right: .15rem; }
.upload { width: 2.4rem; }
.zoomer { width: 3.84rem; margin-left: 24.35rem; display: flex; flex-direction: column; align-items: center; padding-top: .56rem; letter-spacing: -.07em; }
.track { width: 3.84rem; height: .16rem; border-radius: .08rem; border: .02rem solid #c2c2c2; border-top: .04rem solid #ababab; background: #dcdcdc; }
.zoomer span { margin-top: .52rem; }
.kwinfo { width: 2rem; margin-left: 7.24rem; padding-top: .05rem; letter-spacing: -.018em; }
.kwbtn { width: 1.1rem; height: 1.08rem; border-radius: .08rem; background: #dedede; box-shadow: inset 0 0 0 .025rem #8e8e8e; }
.kwbtn svg { width: 1.1rem; height: 1.08rem; }

.status { height: .66rem; flex: none; display: flex; justify-content: space-between; padding: 0 .86rem 0 .38rem; background: linear-gradient(#3a3a3a, #292929 70%, #262626 94%, #111); color: #fff; font-size: .29rem; line-height: .66rem; letter-spacing: -.02em; }
.cat { font-size: .3rem; letter-spacing: -.058em; padding-top: .02rem; }

.taskbar { height: 2.17rem; flex: none; display: flex; justify-content: space-between; background: linear-gradient(#fff 0, #fff .03rem, #e0e0e0 .04rem, #ececec .06rem, #efefef); font-family: "Open Sans", sans-serif; color: #1a1a1a; }
.apps { display: flex; padding-left: .49rem; }
.app { position: relative; width: 1.98rem; height: 2.17rem; }
.app svg { position: relative; width: 1.98rem; height: 2.17rem; }
.run::after { content: ""; position: absolute; left: .88rem; top: 1.84rem; width: .27rem; height: .15rem; border-radius: .08rem; background: #808080; }
.current::before { content: ""; position: absolute; left: .17rem; top: .26rem; width: 1.69rem; height: 1.75rem; border-radius: .14rem; background: #f9f9f9; box-shadow: 0 0 .03rem .01rem #ccc; }
.current::after { left: .66rem; width: .71rem; background: #757575; }
.tray { display: flex; align-items: center; padding-right: .77rem; font-size: .52rem; line-height: .69rem; }
.chev { width: .58rem; height: .34rem; margin-right: .78rem; }
.lang { width: 1.26rem; text-align: center; letter-spacing: -.01em; margin-right: .7rem; }
.sys { width: 2.96rem; height: .72rem; }
.clock { width: 3.32rem; text-align: right; }
.badge { width: .91rem; height: .73rem; margin-left: .25rem; border-radius: .37rem; background: #777; color: #fff; text-align: center; font-size: .48rem; line-height: .72rem; letter-spacing: -.03em; }

/* detection boxes drawn over the whole screen */
.marks { position: absolute; inset: 0; width: 57.6rem; height: 32.4rem; font-family: "Lato", sans-serif; font-size: 22px; pointer-events: none; overflow: hidden; }
.marks path { fill: none; stroke: #000; stroke-width: 3; }
.marks text { fill: #8c8c8c; stroke: #8c8c8c; stroke-width: .4; }
```
